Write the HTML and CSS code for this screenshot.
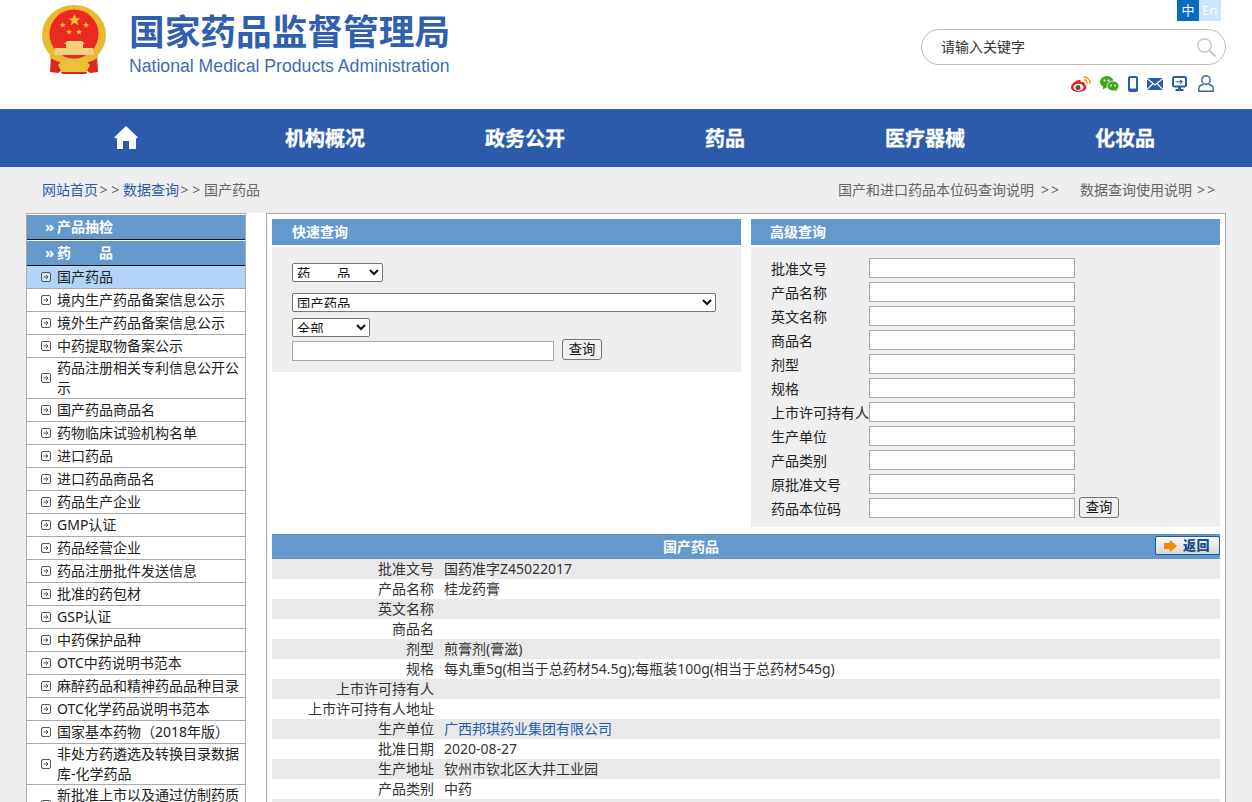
FILE: index.html
```html
<!DOCTYPE html>
<html lang="zh-CN">
<head>
<meta charset="utf-8">
<title>国家药品监督管理局 数据查询</title>
<link rel="stylesheet" href="styles.css">
</head>
<body>
<header class="top">
  <div class="brand">
    <svg class="emblem" viewBox="0 0 64 70" width="64" height="70" aria-hidden="true">
      <path d="M9 50 L8 67 L16 68 L24 62 L40 62 L48 68 L56 67 L55 50 Z" fill="#d8281f"/>
      <ellipse cx="32" cy="30" rx="32" ry="30" fill="#e9b92f"/>
      <circle cx="32" cy="29" r="24.500" fill="#ea2a20"/>
      <polygon fill="#f3c23c" points="32.500,9 34.200,13.200 38.700,13.200 35.100,16 36.400,20.400 32.500,17.800 28.600,20.400 29.900,16 26.300,13.200 30.800,13.200"/>
      <polygon fill="#f3c23c" points="20.700,17 21.500,19 23.700,19 22,20.400 22.600,22.600 20.700,21.300 18.800,22.600 19.400,20.400 17.700,19 19.900,19"/>
      <polygon fill="#f3c23c" points="44,17 44.800,19 47,19 45.300,20.400 45.900,22.600 44,21.300 42.100,22.600 42.700,20.400 41,19 43.200,19"/>
      <polygon fill="#f3c23c" points="27,24 27.800,26 30,26 28.300,27.400 28.900,29.600 27,28.300 25.100,29.600 25.700,27.400 24,26 26.200,26"/>
      <polygon fill="#f3c23c" points="37,24 37.800,26 40,26 38.300,27.400 38.900,29.600 37,28.300 35.100,29.600 35.700,27.400 34,26 36.200,26"/>
      <path d="M25 36 H40 L43 39 H41 V43 H24 V39 H22 Z M13 43 H51 L52 50 H12 Z" fill="#f3d27f"/>
      <path d="M8 47 Q32 64 56 47 L56 53 Q32 66 8 53 Z" fill="#e9b92f"/>
      <path d="M16 60 Q24 50 32 56 Q40 50 48 60 L44 68 H20 Z" fill="#edc03c"/>
      <path d="M19 67 H45 L44 69 H20 Z" fill="#d8281f"/>
    </svg>
    <div class="brand-text">
      <div class="brand-cn">国家药品监督管理局</div>
      <div class="brand-en">National Medical Products Administration</div>
    </div>
  </div>
  <div class="tools">
    <div class="lang"><a class="lang-cn">中</a><a class="lang-en">En</a></div>
    <div class="search">
      <span class="search-text">请输入关键字</span>
      <svg width="19" height="19" viewBox="0 0 19 19" aria-hidden="true"><circle cx="7.500" cy="7.500" r="6.700" fill="none" stroke="#c8c8c8" stroke-width="1.500"/><path d="M12.500 12.500 L18.500 18.500" stroke="#c8c8c8" stroke-width="2"/></svg>
    </div>
    <div class="social">
      <svg width="20" height="16" viewBox="0 0 20 16" aria-hidden="true"><path d="M8 4 C3 5 0 9 0 11.500 C0 14.500 4 16 8 16 C12.500 16 15.500 13.500 15.500 11.300 C15.500 9.500 13.800 9.300 13.800 8.500 C14.300 6.500 12.500 5.500 9.800 6.500 C9.800 4.500 9.500 3.800 8 4 Z" fill="#e2231a"/><ellipse cx="7.500" cy="11.300" rx="5" ry="3.600" fill="#fff"/><circle cx="7" cy="11.500" r="2.500" fill="#555"/><path d="M12.500 .8 A6.500 6.500 0 0 1 19 7.500" fill="none" stroke="#f0a315" stroke-width="1.700"/><path d="M13 3.800 A3.500 3.500 0 0 1 16.200 7" fill="none" stroke="#f0a315" stroke-width="1.500"/></svg>
      <svg width="19" height="16" viewBox="0 0 19 16" aria-hidden="true"><ellipse cx="6.800" cy="5.800" rx="6.800" ry="5.800" fill="#43a518"/><path d="M3 10 L2.800 13.500 L7 11 Z" fill="#43a518"/><ellipse cx="13" cy="10" rx="6" ry="5" fill="#43a518" stroke="#fff" stroke-width=".8"/><path d="M15 14 L16.500 16 L16.500 13 Z" fill="#43a518"/><circle cx="4.500" cy="4.500" r="1" fill="#fff"/><circle cx="8.500" cy="4.500" r="1" fill="#fff"/><circle cx="11" cy="9.500" r=".9" fill="#fff"/><circle cx="15" cy="9.500" r=".9" fill="#fff"/></svg>
      <svg width="10" height="16" viewBox="0 0 10 16" aria-hidden="true"><rect x="0" y="0" width="10" height="16" rx="2" fill="#2c5bab"/><rect x="2" y="2" width="6" height="10.500" fill="#fff"/></svg>
      <svg width="16" height="12" viewBox="0 0 16 12" aria-hidden="true"><rect width="16" height="12" fill="#2c5bab"/><path d="M0 .5 L8 7 L16 .5 M0 11.500 L6 5.500 M16 11.500 L10 5.500" fill="none" stroke="#fff" stroke-width="1.200"/></svg>
      <svg width="15" height="15" viewBox="0 0 15 15" aria-hidden="true"><rect x="1" y="1" width="13" height="9.500" rx="1.500" fill="#fff" stroke="#2c5bab" stroke-width="2"/><rect x="6" y="11" width="3" height="2" fill="#2c5bab"/><rect x="3.500" y="13" width="8" height="2" fill="#2c5bab"/><path d="M3.500 5.800 H10 M8 3.800 L10.300 5.800 L8 7.800" fill="none" stroke="#2c5bab" stroke-width="1.100"/></svg>
      <svg class="ic-user" width="16" height="17" viewBox="0 0 16 17" aria-hidden="true"><circle cx="8" cy="5" r="4.200" fill="none" stroke="#3a62ad" stroke-width="1.400"/><path d="M5.500 9.500 C2.500 10 .8 11.500 .8 13.500 V16.200 H15.200 V13.500 C15.200 11.500 13.500 10 10.500 9.500" fill="none" stroke="#3a62ad" stroke-width="1.400"/></svg>
    </div>
  </div>
</header>

<nav class="nav">
  <a class="nav-item"><svg class="ic-home" width="24" height="23" viewBox="0 0 24 23" aria-hidden="true"><path d="M12 0 L24 11.500 L22 12.500 V23 H15 V15 H9 V23 H3 V12.500 L0 11.500 Z" fill="#fff"/></svg></a>
  <a class="nav-item">机构概况</a>
  <a class="nav-item">政务公开</a>
  <a class="nav-item">药品</a>
  <a class="nav-item">医疗器械</a>
  <a class="nav-item">化妆品</a>
</nav>

<div class="crumbs">
  <div class="crumbs-left"><a>网站首页</a><span class="sep">&gt; &gt;</span><a>数据查询</a><span class="sep">&gt; &gt;</span><span>国产药品</span></div>
  <div class="crumbs-right"><span>国产和进口药品本位码查询说明<span class="sep sep-a">&gt; &gt;</span></span><span>数据查询使用说明<span class="sep sep-b">&gt; &gt;</span></span></div>
</div>

<div class="wrap">
  <aside class="side">
    <div class="side-head">产品抽检</div>
    <div class="side-head">药&emsp;&emsp;品</div>
    <ul class="side-list">
      <li class="on">国产药品</li>
      <li>境内生产药品备案信息公示</li>
      <li>境外生产药品备案信息公示</li>
      <li>中药提取物备案公示</li>
      <li>药品注册相关专利信息公开公示</li>
      <li>国产药品商品名</li>
      <li>药物临床试验机构名单</li>
      <li>进口药品</li>
      <li>进口药品商品名</li>
      <li>药品生产企业</li>
      <li>GMP认证</li>
      <li>药品经营企业</li>
      <li>药品注册批件发送信息</li>
      <li>批准的药包材</li>
      <li>GSP认证</li>
      <li>中药保护品种</li>
      <li>OTC中药说明书范本</li>
      <li>麻醉药品和精神药品品种目录</li>
      <li>OTC化学药品说明书范本</li>
      <li>国家基本药物（2018年版）</li>
      <li>非处方药遴选及转换目录数据库-化学药品</li>
      <li class="cut">新批准上市以及通过仿制药质</li>
    </ul>
  </aside>

  <main class="main">
    <div class="queries">
      <section class="panel">
        <h2 class="panel-head">快速查询</h2>
        <div class="panel-body quick">
          <select class="sel sel-a"><option>药&emsp;&emsp;品</option></select>
          <select class="sel sel-b"><option>国产药品</option></select>
          <select class="sel sel-c"><option>全部</option></select>
          <div class="quick-row"><input class="txt txt-wide" type="text"><button class="btn" type="button">查询</button></div>
        </div>
      </section>
      <section class="panel">
        <h2 class="panel-head panel-head-b">高级查询</h2>
        <div class="panel-body adv">
          <label class="adv-row"><span>批准文号</span><input class="txt" type="text"></label>
          <label class="adv-row"><span>产品名称</span><input class="txt" type="text"></label>
          <label class="adv-row"><span>英文名称</span><input class="txt" type="text"></label>
          <label class="adv-row"><span>商品名</span><input class="txt" type="text"></label>
          <label class="adv-row"><span>剂型</span><input class="txt" type="text"></label>
          <label class="adv-row"><span>规格</span><input class="txt" type="text"></label>
          <label class="adv-row"><span>上市许可持有人</span><input class="txt" type="text"></label>
          <label class="adv-row"><span>生产单位</span><input class="txt" type="text"></label>
          <label class="adv-row"><span>产品类别</span><input class="txt" type="text"></label>
          <label class="adv-row"><span>原批准文号</span><input class="txt" type="text"></label>
          <label class="adv-row"><span>药品本位码</span><input class="txt" type="text"><button class="btn btn-adv" type="button">查询</button></label>
        </div>
      </section>
    </div>

    <section class="result">
      <div class="result-head">
        <span class="result-title">国产药品</span>
        <a class="back"><svg width="13" height="12" viewBox="0 0 13 12" aria-hidden="true"><path d="M0 3 H6 V0 L13 6 L6 12 V9 H0 Z" fill="#ee8a0a"/></svg><b>返回</b></a>
      </div>
      <dl class="rows">
        <div class="row"><dt>批准文号</dt><dd>国药准字Z45022017</dd></div>
        <div class="row"><dt>产品名称</dt><dd>桂龙药膏</dd></div>
        <div class="row"><dt>英文名称</dt><dd></dd></div>
        <div class="row"><dt>商品名</dt><dd></dd></div>
        <div class="row"><dt>剂型</dt><dd>煎膏剂(膏滋)</dd></div>
        <div class="row"><dt>规格</dt><dd>每丸重5g(相当于总药材54.5g);每瓶装100g(相当于总药材545g)</dd></div>
        <div class="row"><dt>上市许可持有人</dt><dd></dd></div>
        <div class="row"><dt>上市许可持有人地址</dt><dd></dd></div>
        <div class="row"><dt>生产单位</dt><dd><a class="link">广西邦琪药业集团有限公司</a></dd></div>
        <div class="row"><dt>批准日期</dt><dd>2020-08-27</dd></div>
        <div class="row"><dt>生产地址</dt><dd>钦州市钦北区大井工业园</dd></div>
        <div class="row"><dt>产品类别</dt><dd>中药</dd></div>
        <div class="row"></div>
      </dl>
    </section>
  </main>
</div>
</body>
</html>
```

FILE: styles.css
```css
* { box-sizing: border-box; }
html, body { margin: 0; padding: 0; height: 802px; overflow: hidden; }
body {
  width: 1252px;
  background: #eee;
  color: #333;
  font: 14px/20px "Noto Sans", "Noto Sans CJK SC", sans-serif;
}
a { color: inherit; text-decoration: none; }

/* header */
.top {
  height: 109px;
  background: #fff;
  display: flex;
  justify-content: space-between;
  padding: 0 26px 0 42px;
}
.brand { display: flex; align-items: flex-start; gap: 23px; padding-top: 5px; }
.emblem { display: block; }
.brand-text { padding-top: 4px; width: 322px; }
.brand-cn {
  color: #2f5fae;
  font-size: 35.700px;
  line-height: 44px;
  font-weight: 700;
  white-space: nowrap;
}
.brand-en {
  color: #3f6bb5;
  font: 17.650px/20px "Liberation Sans", sans-serif;
  margin-top: 3px;
  white-space: nowrap;
}
.tools { width: 305px; display: flex; flex-direction: column; align-items: flex-end; }
.lang { display: flex; margin-right: 5px; }
.lang a { width: 22px; height: 21px; line-height: 20px; text-align: center; color: #fff; font-size: 13px; }
.lang-cn { background: #0b6cbf; }
.lang-en { background: #cbe6fe; }
.search {
  width: 305px;
  height: 36px;
  margin-top: 8px;
  border: 1px solid #bbb;
  border-radius: 18px;
  padding: 0 9px 0 19px;
  display: flex;
  align-items: center;
  justify-content: space-between;
}
.search-text { color: #333; }
.social {
  display: flex;
  align-items: center;
  gap: 9px;
  margin: 10px 12px 0 0;
}
.ic-user { margin-left: 2px; }

/* nav */
.nav {
  height: 58px;
  background: #2c5bab;
  padding-left: 25px;
  display: flex;
}
.nav-item {
  width: 200px;
  display: flex;
  align-items: center;
  justify-content: center;
  padding-top: 2px;
  color: #fff;
  font-size: 20px;
  font-weight: 700;
  -webkit-text-stroke: .3px #fff;
}
.ic-home { margin: 0 0 3px 2px; }

/* breadcrumb */
.crumbs {
  height: 46px;
  padding: 0 38px 0 42px;
  display: flex;
  align-items: center;
  justify-content: space-between;
  color: #666;
}
.crumbs-left a { color: #2c5bab; }
.sep { color: #666; }
.crumbs-left .sep { margin: 0 3.900px 0 1.500px; }
.sep-a, .sep-b { letter-spacing: -.9px; }
.sep-a { margin-left: 7px; }
.sep-b { margin-left: 5px; }
.crumbs-right { display: flex; gap: 22px; }

/* shell */
.wrap {
  margin-left: 26px;
  width: 1200px;
  height: 600px;
  display: flex;
  background: #fff;
}
.side {
  width: 220px;
  flex: none;
  border: 1px solid #aaa;
  border-bottom: 0;
  padding-top: 1px;
  background: #fff;
  margin-right: 20px;
}
.side-head {
  height: 25px;
  line-height: 24px;
  background: #6499cd;
  border-bottom: 1px solid #111;
  margin-bottom: 1px;
  color: #fff;
  font-weight: 700;
  padding-left: 30px;
  position: relative;
}
.side-head::before {
  content: "»";
  position: absolute;
  left: 18px;
  top: -1px;
  font-size: 15px;
}
.side-head + .side-head { margin-bottom: 0; }
.side-list { list-style: none; margin: 0; padding: 0; }
.side-list li {
  min-height: 22px;
  line-height: 20px;
  border-bottom: 1px solid #aaa;
  box-sizing: content-box;
  padding: 0 4px 0 30px;
  color: #222;
  position: relative;
  display: flex;
  align-items: center;
}
.side-list li.on { background: #b3d4f7; }
.side-list li.cut { height: 40px; align-items: flex-start; white-space: nowrap; }
.side-list li::before {
  content: "";
  position: absolute;
  left: 14px;
  top: 50%;
  width: 10px;
  height: 10px;
  margin-top: -5px;
  background: url("data:image/svg+xml,%3Csvg xmlns='http://www.w3.org/2000/svg' width='10' height='10'%3E%3Crect x='.5' y='.5' width='9' height='9' rx='1.500' fill='%23fff' fill-opacity='.4' stroke='%23555'/%3E%3Cpath d='M2.500 5H7M5 3L7 5L5 7' fill='none' stroke='%23555'/%3E%3C/svg%3E") no-repeat;
}

.main {
  flex: 1;
  min-width: 0;
  border: 1px solid #aaa;
  border-bottom: 0;
  padding: 5px 5px 0;
}
.queries { display: flex; gap: 10px; align-items: flex-start; }
.panel { width: 469px; flex: none; }
.panel-head {
  margin: 0 0 2px;
  height: 26px;
  line-height: 26px;
  padding-left: 20px;
  background: #6499cd;
  color: #fff;
  font-size: 14px;
  font-weight: 700;
}
.panel-head-b { padding-left: 19px; }
.panel-body { background: #eee; }
.quick {
  height: 125px;
  padding: 16px 20px 0;
  display: flex;
  flex-direction: column;
  align-items: flex-start;
}
.sel {
  height: 19px;
  padding: 0 0 3px;
  font: 13.333px/15px "Noto Sans", "Noto Sans CJK SC", sans-serif;
  color: #111;
  background: #fff;
  border: 1px solid #767676;
  border-radius: 2px;
}
.sel-a { width: 91px; }
.sel-b { width: 424px; margin-top: 11px; }
.sel-c { width: 78px; margin-top: 6px; }
.quick-row { display: flex; align-items: flex-start; gap: 8px; margin-top: 2px; }
.quick-row .txt { margin-top: 2px; }
.txt {
  width: 206px;
  height: 20px;
  padding: 0 2px;
  border: 1px solid #aaa;
  background: #fff;
  display: block;
}
.txt-wide { width: 262px; }
.btn {
  width: 40px;
  height: 21px;
  padding: 0;
  font: 13.333px/19px "Noto Sans", "Noto Sans CJK SC", sans-serif;
  color: #111;
  background: #efefef;
  border: 1px solid #767676;
  border-radius: 3px;
}
.adv { height: 280px; padding: 9px 0 0 20px; }
.adv-row { display: flex; align-items: center; height: 24px; color: #222; }
.adv-row span { width: 98px; flex: none; white-space: nowrap; padding-top: 2px; }
.btn-adv { margin: 0 0 2px 4px; }

/* detail */
.result { margin-top: 7px; }
.result-head {
  height: 25px;
  background: #6499cd;
  position: relative;
  text-align: center;
  padding-right: 110px;
  line-height: 25px;
  color: #fff;
  font-weight: 700;
}
.back {
  position: absolute;
  right: 0;
  top: 2px;
  width: 65px;
  height: 19px;
  border: 1px solid #1a5a9e;
  border-radius: 2px;
  background: linear-gradient(#fafafa, #d6d6d6);
  display: flex;
  align-items: center;
  gap: 6px;
  padding-left: 8px;
  color: #1a4f8f;
  line-height: 17px;
}
.back svg { flex: none; }
.back b { font-size: 13px; letter-spacing: .5px; font-weight: 900; }
.rows { margin: 0; }
.row { display: flex; height: 20px; line-height: 20px; }
.row:nth-child(odd) { background: #e9e9e9; }
.row dt { width: 162px; text-align: right; flex: none; white-space: nowrap; }
.row dd { margin: 0 0 0 10px; }
.link { color: #1a5fb4; }
```
